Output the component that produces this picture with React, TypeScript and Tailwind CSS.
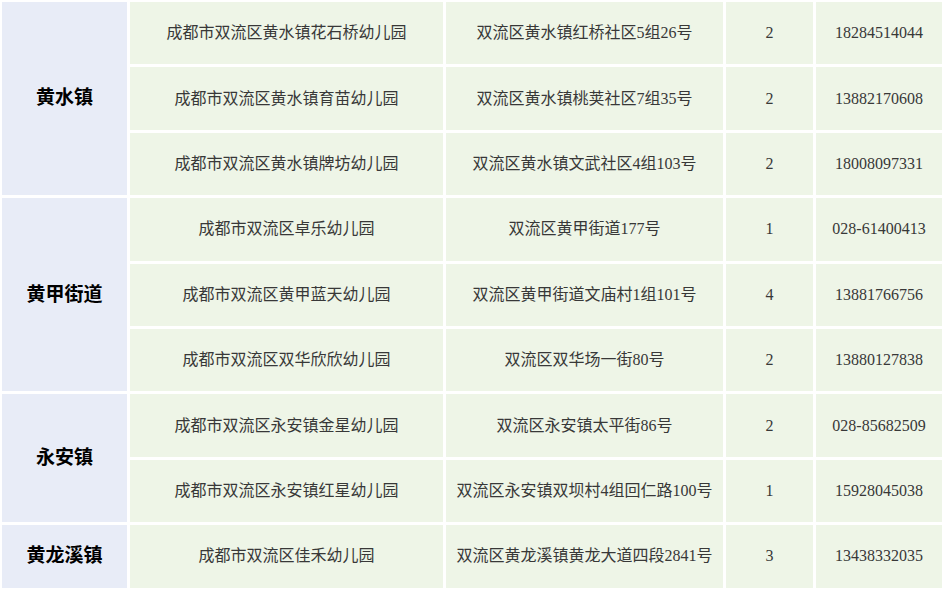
const groups = [
  {
    name: "黄水镇",
    rows: [
      ["成都市双流区黄水镇花石桥幼儿园", "双流区黄水镇红桥社区5组26号", "2", "18284514044"],
      ["成都市双流区黄水镇育苗幼儿园", "双流区黄水镇桃荚社区7组35号", "2", "13882170608"],
      ["成都市双流区黄水镇牌坊幼儿园", "双流区黄水镇文武社区4组103号", "2", "18008097331"],
    ],
  },
  {
    name: "黄甲街道",
    rows: [
      ["成都市双流区卓乐幼儿园", "双流区黄甲街道177号", "1", "028-61400413"],
      ["成都市双流区黄甲蓝天幼儿园", "双流区黄甲街道文庙村1组101号", "4", "13881766756"],
      ["成都市双流区双华欣欣幼儿园", "双流区双华场一街80号", "2", "13880127838"],
    ],
  },
  {
    name: "永安镇",
    rows: [
      ["成都市双流区永安镇金星幼儿园", "双流区永安镇太平街86号", "2", "028-85682509"],
      ["成都市双流区永安镇红星幼儿园", "双流区永安镇双坝村4组回仁路100号", "1", "15928045038"],
    ],
  },
  {
    name: "黄龙溪镇",
    rows: [["成都市双流区佳禾幼儿园", "双流区黄龙溪镇黄龙大道四段2841号", "3", "13438332035"]],
  },
];

const spans: Record<number, string> = {
  1: "row-span-1",
  2: "row-span-2",
  3: "row-span-3",
};

const App = () => {
  return (
    <div
      className="w-[944px] h-[589px] overflow-hidden bg-white p-[2px]"
      style={{ fontFamily: '"Liberation Serif", "Noto Sans CJK SC", serif' }}
    >
      <div className="grid grid-cols-[125px_313px_277px_87px_126px] auto-rows-[62.4px] gap-[3px] grid-flow-row-dense">
        {groups.map((g) => (
          <div key={g.name} className="contents">
            <div
              className={`${spans[g.rows.length]} col-start-1 bg-[#e8ecf7] flex items-center justify-center text-[19px] font-bold text-black`}
            >
              {g.name}
            </div>
            {g.rows.map((r, i) => (
              <div key={i} className="contents">
                {r.map((c, j) => (
                  <div
                    key={j}
                    className="bg-[#eef5e7] flex items-center justify-center text-[16px] text-[#383838] whitespace-nowrap"
                  >
                    {c}
                  </div>
                ))}
              </div>
            ))}
          </div>
        ))}
      </div>
    </div>
  );
};

export default App;
